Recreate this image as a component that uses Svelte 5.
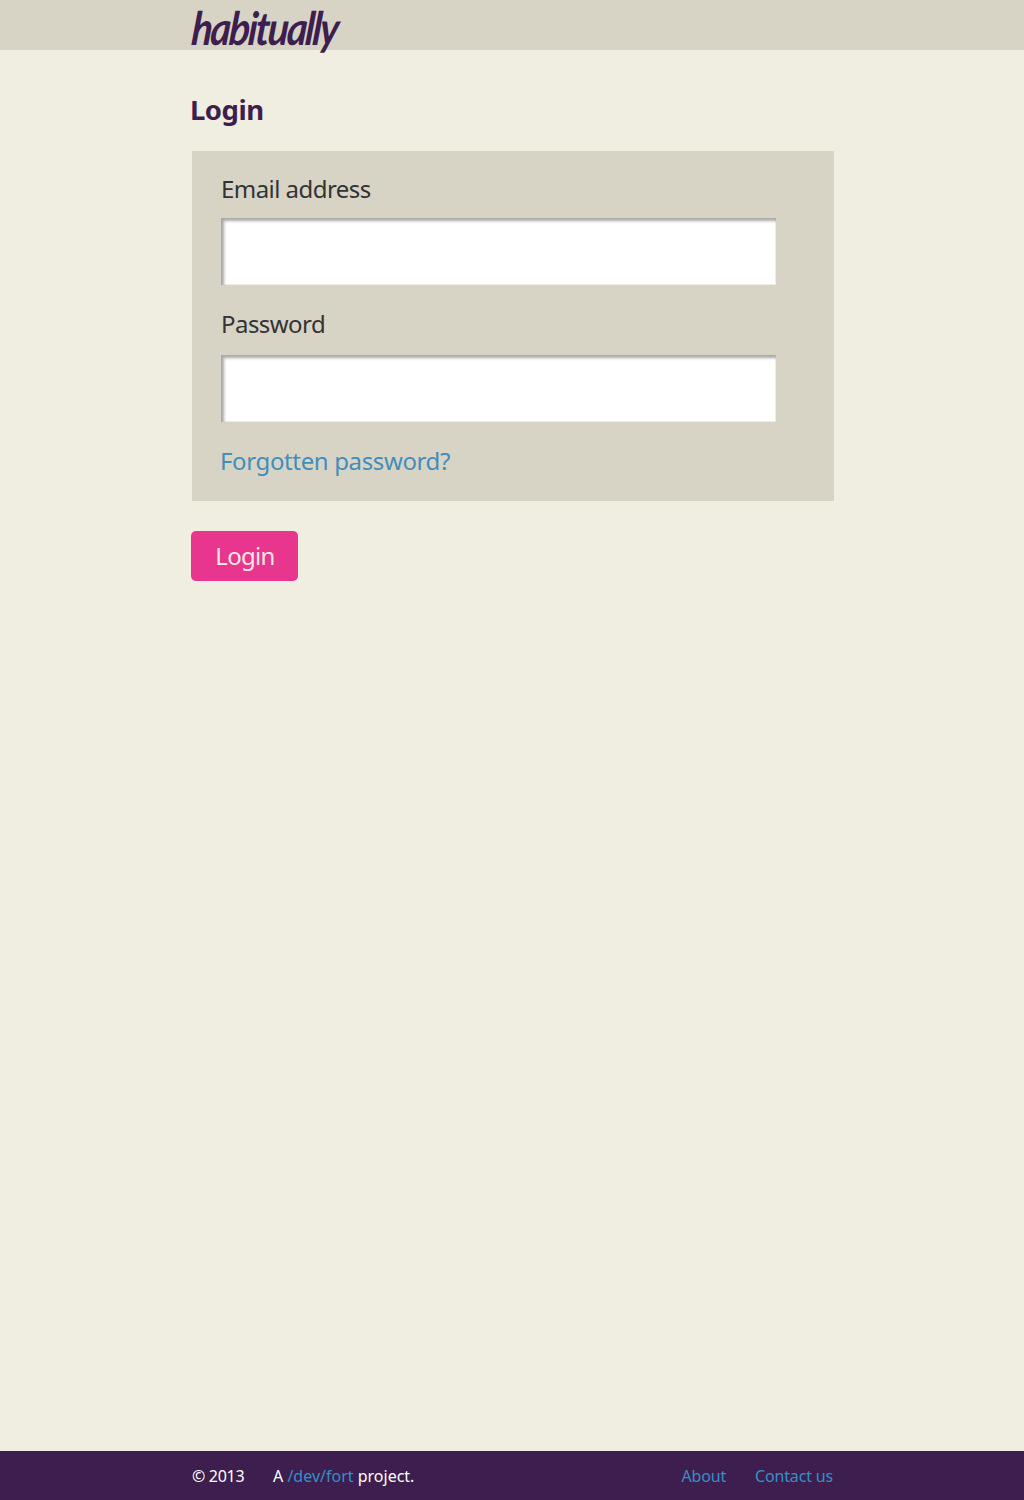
<script lang="ts">
  let email = $state('');
  let password = $state('');
</script>

<div class="page">
  <header>
    <div class="wrap"><span class="logo">habitually</span></div>
  </header>

  <main class="wrap">
    <h1>Login</h1>
    <form onsubmit={(e) => e.preventDefault()}>
      <div class="panel">
        <label class="email" for="email">Email address</label>
        <input id="email" type="email" bind:value={email} />
        <label class="pass" for="password">Password</label>
        <input id="password" type="password" bind:value={password} />
        <a class="forgot" href="#forgotten">Forgotten password?</a>
      </div>
      <button type="submit">Login</button>
    </form>
  </main>

  <footer>
    <div class="wrap bar">
      <span class="copy">© 2013</span>
      <span class="project">A <a href="#devfort">/dev/fort</a> project.</span>
      <nav>
        <a class="about" href="#about">About</a>
        <a class="contact" href="#contact">Contact us</a>
      </nav>
    </div>
  </footer>
</div>

<style>
  :global(body) {
    margin: 0;
    background: #f0ede1;
  }
  .page {
    display: flex;
    flex-direction: column;
    height: 1500px;
    font-family: 'Noto Sans', 'Open Sans', sans-serif;
    color: #333;
    background: #f0ede1;
  }
  .wrap {
    width: 642px;
    margin-left: 192px;
  }
  header {
    height: 50px;
    background: #d8d4c5;
  }
  .logo {
    display: block;
    width: max-content;
    font: italic 700 46px/56px Lato, sans-serif;
    letter-spacing: -2.4px;
    color: #3d1e4f;
    transform-origin: left center;
    transform: scaleX(0.85) skewX(-6deg);
  }
  main {
    flex: 1;
  }
  h1 {
    margin: 39px 0 0 -2px;
    font-size: 27.5px;
    line-height: 42px;
    letter-spacing: -0.5px;
    color: #3d1e4f;
  }
  .panel {
    display: flex;
    flex-direction: column;
    align-items: flex-start;
    box-sizing: border-box;
    height: 350px;
    margin-top: 20px;
    padding: 21px 29px 0;
    background: #d7d4c5;
  }
  label,
  .forgot {
    font-size: 24px;
    line-height: 34px;
    white-space: nowrap;
  }
  .email {
    letter-spacing: -0.55px;
  }
  .pass {
    margin-top: 22px;
    letter-spacing: -0.55px;
  }
  input {
    box-sizing: border-box;
    width: 555px;
    height: 67px;
    margin: 12px 0 0;
    padding: 4px 16px;
    border: 0;
    outline: 0;
    background: #fff;
    box-shadow:
      inset 3px 3px 3px #a9a9a9,
      inset -1px -1px 0 #eeece4;
    font: 24px 'Noto Sans', sans-serif;
  }
  .pass + input {
    margin-top: 14px;
  }
  a {
    color: #3390c6;
    text-decoration: none;
  }
  .forgot {
    margin: 22px 0 0 -1px;
    color: #438dbc;
    letter-spacing: -0.37px;
  }
  button {
    width: 107px;
    height: 50px;
    margin: 30px 0 0 -1px;
    padding: 0 0 0 1px;
    border: 0;
    border-radius: 5px;
    background: #e8368f;
    color: #f4eadf;
    font: 24px/50px 'Noto Sans', sans-serif;
    letter-spacing: -0.7px;
  }
  footer {
    height: 49px;
    background: #3d1e4e;
    color: #fff;
    font-size: 16px;
  }
  .bar {
    display: flex;
    align-items: center;
    height: 50px;
    white-space: nowrap;
  }
  .copy {
    width: 81px;
    letter-spacing: -0.3px;
  }
  .project {
    letter-spacing: 0;
  }
  nav {
    display: flex;
    gap: 29px;
    margin: 0 1px 0 auto;
    letter-spacing: -0.17px;
  }
</style>
